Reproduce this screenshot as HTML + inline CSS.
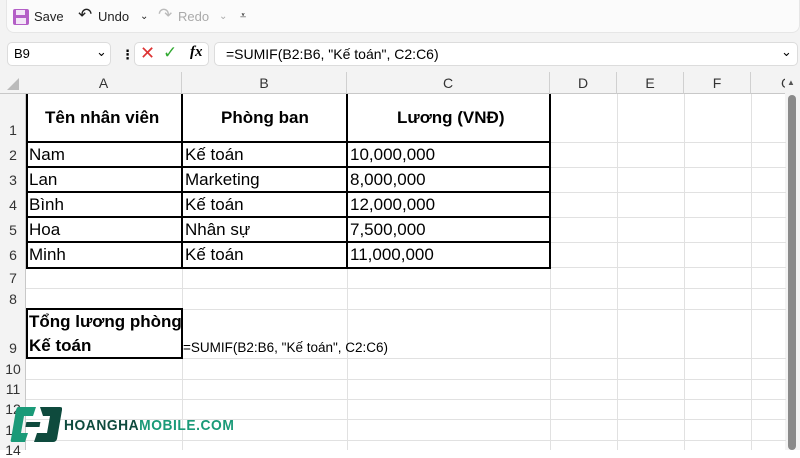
<!DOCTYPE html>
<html><head><meta charset="utf-8"><style>
*{margin:0;padding:0;box-sizing:border-box}
body{width:800px;height:450px;overflow:hidden;background:#fff;font-family:"Liberation Sans","DejaVu Sans",sans-serif;position:relative;color:#000}
.a{position:absolute}
.tb{left:0;top:0;width:800px;height:72px;background:#f3f3f3}
.tbw{left:6px;top:0;width:794px;height:33px;background:#fbfbfb;border-radius:0 0 8px 8px;border:1px solid #e6e6e6;border-top:none}
.tt{font-size:13px;color:#222;top:9px}
.box{background:#fff;border:1px solid #dcdcdc;border-radius:5px;height:24px;top:42px}
.ch{top:72px;height:22px;background:#f3f3f3;border-bottom:1px solid #c8c8c8;font-size:14px;color:#333;text-align:center;line-height:22px}
.rh{left:0;width:26px;background:#f3f3f3;border-right:1px solid #c8c8c8;font-size:14px;color:#333;text-align:center}
.vl{top:94px;width:1px;height:356px;background:#e1e1e1}
.hl{left:26px;width:760px;height:1px;background:#e1e1e1}
.c{font-size:17px;white-space:nowrap}
.b{font-weight:bold}
</style></head><body>
<div class="a tb"></div>
<div class="a tbw"></div>
<svg class="a" style="left:12px;top:8px" width="18" height="18" viewBox="0 0 18 18"><rect x="1" y="1" width="16" height="16" rx="2" fill="#b45fc7"/><rect x="4" y="2" width="9" height="5" fill="#f3e6f7"/><rect x="4" y="10" width="10" height="6" fill="#f3e6f7"/></svg>
<div class="a tt" style="left:34px">Save</div>
<div class="a tt" style="left:78px;font-size:17px;top:5px">↶</div>
<div class="a tt" style="left:98px">Undo</div>
<div class="a tt" style="left:140px;font-size:10px;top:11px">⌄</div>
<div class="a tt" style="left:158px;font-size:17px;top:5px;color:#bbb">↷</div>
<div class="a tt" style="left:178px;color:#aaa">Redo</div>
<div class="a tt" style="left:219px;font-size:10px;top:11px;color:#aaa">⌄</div>
<div class="a tt" style="left:240px;font-size:11px;top:10px">⩡</div>
<div class="a box" style="left:7px;width:104px"><span class="a" style="left:6px;top:3px;font-size:13px">B9</span><span class="a" style="left:88px;top:1px;font-size:13px">⌄</span></div>
<div class="a" style="left:121px;top:47px;font-size:13px;font-weight:bold">⋮</div>
<div class="a box" style="left:134px;width:75px"><span class="a" style="left:5px;top:0px;font-size:18px;color:#d33">✕</span><span class="a" style="left:28px;top:0;font-size:17px;color:#3a3">✓</span><span class="a" style="left:55px;top:1px;font-size:15px;font-style:italic;font-family:'Liberation Serif',serif;font-weight:bold">fx</span></div>
<div class="a box" style="left:214px;width:584px"><span class="a" style="left:11px;top:3px;font-size:14px">=SUMIF(B2:B6, "Kế toán", C2:C6)</span><span class="a" style="left:566px;top:1px;font-size:13px">⌄</span></div>
<div class="a ch" style="left:0;width:26px"><svg width="14" height="14" style="margin-top:5px"><path d="M13 1V13H1Z" fill="#bbb"/></svg></div>
<div class="a ch" style="left:26px;width:156px;border-right:1px solid #d0d0d0">A</div>
<div class="a ch" style="left:182px;width:165px;border-right:1px solid #d0d0d0">B</div>
<div class="a ch" style="left:347px;width:203px;border-right:1px solid #d0d0d0">C</div>
<div class="a ch" style="left:550px;width:67px;border-right:1px solid #d0d0d0">D</div>
<div class="a ch" style="left:617px;width:67px;border-right:1px solid #d0d0d0">E</div>
<div class="a ch" style="left:684px;width:67px;border-right:1px solid #d0d0d0">F</div>
<div class="a ch" style="left:751px;width:49px;text-align:left;padding-left:30px">G</div>
<div class="a" style="left:785px;top:72px;width:15px;height:378px;background:#f3f3f3"></div>
<div class="a" style="left:788px;top:95px;width:8px;height:355px;background:#8a8a8a;border-radius:4px"></div>
<div class="a" style="left:787px;top:78px;font-size:8px;color:#555">▲</div>
<div class="a rh" style="top:94px;height:356px"></div>
<div class="a vl" style="left:182px"></div><div class="a vl" style="left:347px"></div><div class="a vl" style="left:550px"></div><div class="a vl" style="left:617px"></div><div class="a vl" style="left:684px"></div><div class="a vl" style="left:751px"></div>
<div class="a hl" style="top:142px"></div><div class="a hl" style="top:167px"></div><div class="a hl" style="top:192px"></div><div class="a hl" style="top:217px"></div><div class="a hl" style="top:242px"></div><div class="a hl" style="top:267px"></div><div class="a hl" style="top:288px"></div><div class="a hl" style="top:309px"></div><div class="a hl" style="top:358px"></div><div class="a hl" style="top:379px"></div><div class="a hl" style="top:399px"></div><div class="a hl" style="top:419px"></div><div class="a hl" style="top:440px"></div>
<div class="a rh" style="top:122px;height:20px;border:none;background:none">1</div>
<div class="a rh" style="top:147px;border:none;background:none">2</div>
<div class="a rh" style="top:172px;border:none;background:none">3</div>
<div class="a rh" style="top:197px;border:none;background:none">4</div>
<div class="a rh" style="top:222px;border:none;background:none">5</div>
<div class="a rh" style="top:247px;border:none;background:none">6</div>
<div class="a rh" style="top:270px;border:none;background:none">7</div>
<div class="a rh" style="top:291px;border:none;background:none">8</div>
<div class="a rh" style="top:340px;border:none;background:none">9</div>
<div class="a rh" style="top:361px;border:none;background:none">10</div>
<div class="a rh" style="top:381px;border:none;background:none">11</div>
<div class="a rh" style="top:401px;border:none;background:none">12</div>
<div class="a rh" style="top:422px;border:none;background:none">13</div>
<div class="a rh" style="top:442px;border:none;background:none">14</div>
<div class="a" style="left:26px;top:94px;width:525px;height:175px;border:2px solid #000;border-top:none"></div>
<div class="a" style="left:181px;top:94px;width:2px;height:174px;background:#000"></div>
<div class="a" style="left:346px;top:94px;width:2px;height:174px;background:#000"></div>
<div class="a" style="left:26px;top:141px;width:524px;height:2px;background:#000"></div>
<div class="a" style="left:26px;top:166px;width:524px;height:2px;background:#000"></div>
<div class="a" style="left:26px;top:191px;width:524px;height:2px;background:#000"></div>
<div class="a" style="left:26px;top:216px;width:524px;height:2px;background:#000"></div>
<div class="a" style="left:26px;top:241px;width:524px;height:2px;background:#000"></div>
<div class="a c b" style="left:45px;top:108px">Tên nhân viên</div>
<div class="a c b" style="left:221px;top:108px">Phòng ban</div>
<div class="a c b" style="left:397px;top:108px">Lương (VNĐ)</div>
<div class="a c" style="left:29px;top:145px">Nam</div><div class="a c" style="left:185px;top:145px">Kế toán</div><div class="a c" style="left:350px;top:145px">10,000,000</div>
<div class="a c" style="left:29px;top:170px">Lan</div><div class="a c" style="left:185px;top:170px">Marketing</div><div class="a c" style="left:350px;top:170px">8,000,000</div>
<div class="a c" style="left:29px;top:195px">Bình</div><div class="a c" style="left:185px;top:195px">Kế toán</div><div class="a c" style="left:350px;top:195px">12,000,000</div>
<div class="a c" style="left:29px;top:220px">Hoa</div><div class="a c" style="left:185px;top:220px">Nhân sự</div><div class="a c" style="left:350px;top:220px">7,500,000</div>
<div class="a c" style="left:29px;top:245px">Minh</div><div class="a c" style="left:185px;top:245px">Kế toán</div><div class="a c" style="left:350px;top:245px">11,000,000</div>
<div class="a" style="left:26px;top:308px;width:157px;height:51px;border:2px solid #000;background:#fff"></div>
<div class="a c b" style="left:29px;top:312px">Tổng lương phòng</div>
<div class="a c b" style="left:29px;top:336px">Kế toán</div>
<div class="a" style="left:183px;top:340px;font-size:13.5px;white-space:nowrap">=SUMIF(B2:B6, "Kế toán", C2:C6)</div>
<svg class="a" style="left:10px;top:407px" width="52" height="35" viewBox="0 0 52 35"><path d="M8 0H26L23 9H14L11 26H18L15 35H2Q0 35 1 32L6 3Q7 0 8 0Z" fill="#1a9a78"/><path d="M30 0H50Q53 0 52 3L47 32Q46 35 43 35H24L27 26H37L40 9H33Z" fill="#0e4a3d"/><rect x="19" y="15" width="14" height="5" fill="#0e4a3d" transform="skewX(-10)"/></svg>
<div class="a" style="left:64px;top:417px;font-size:15px;font-weight:bold;letter-spacing:0.6px;white-space:nowrap;font-family:'Liberation Sans',sans-serif;transform:scaleX(0.92);transform-origin:left"><span style="color:#0e4a3d">HOANGHA</span><span style="color:#1a9a78">MOBILE.COM</span></div>
</body></html>
